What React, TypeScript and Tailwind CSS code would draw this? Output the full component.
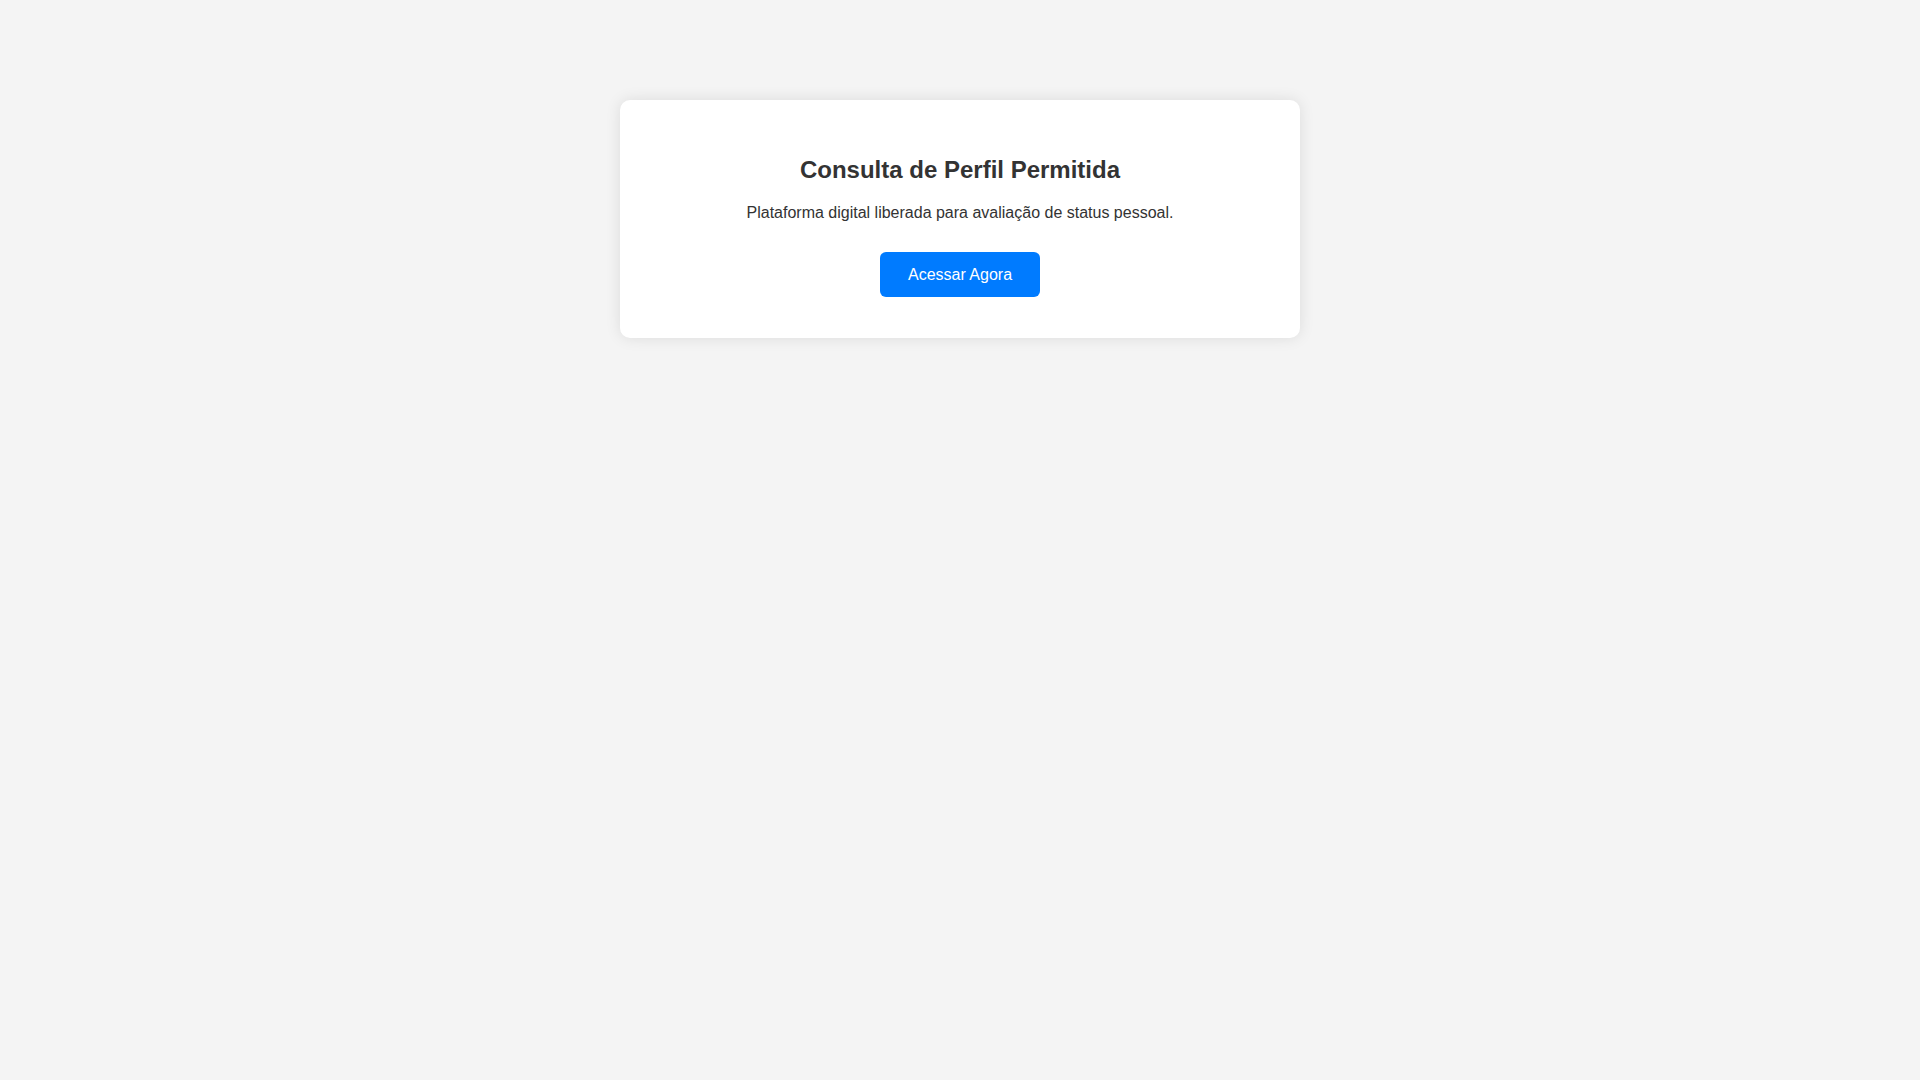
import React from 'react';

export default function App() {
  return (
    <div className="min-h-screen w-full bg-[#f4f4f4] pt-[100px] font-['Liberation_Sans',Arial,sans-serif] text-[#333]">
      {/* cartão central */}
      <div className="mx-auto flex w-[680px] flex-col items-center rounded-[10px] bg-white px-10 pt-[56px] pb-[41px] text-center shadow-[0_0_15px_rgba(0,0,0,0.1)]">
        <h2 className="text-[24px] font-bold leading-[27.6px]">Consulta de Perfil Permitida</h2>
        <p className="mt-5 text-[16px] leading-[18.4px]">
          Plataforma digital liberada para avaliação de status pessoal.
        </p>
        <button className="mt-[30px] flex h-[45px] w-[160px] items-center justify-center rounded-[6px] bg-[#007bff] text-[16px] text-white">
          Acessar Agora
        </button>
      </div>
    </div>
  );
}
